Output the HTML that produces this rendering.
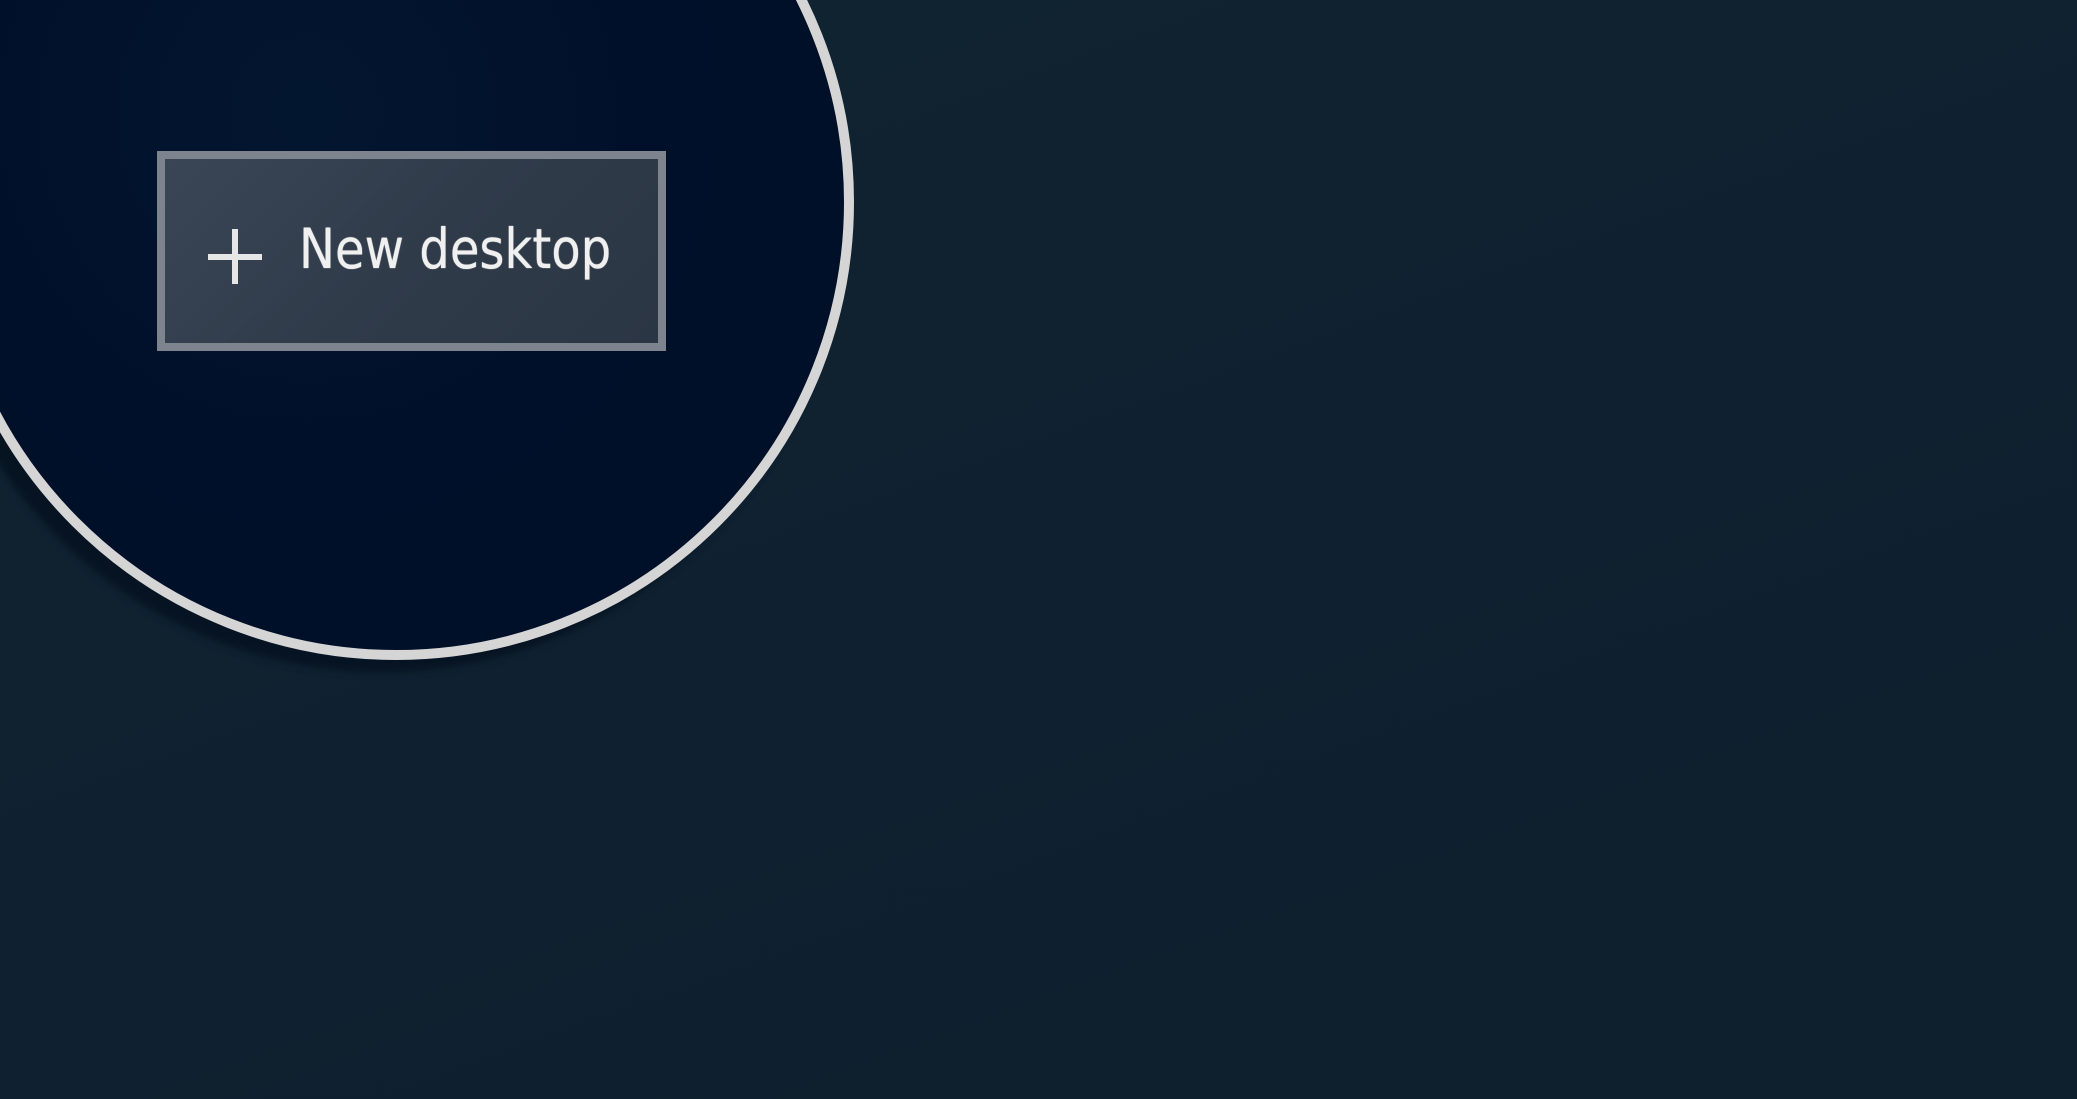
<!DOCTYPE html>
<html><head><meta charset="utf-8"><style>
html,body{margin:0;padding:0;width:2077px;height:1099px;overflow:hidden;background:#10212f;}
body{background:linear-gradient(160deg,#112431 0%,#0f2130 50%,#0e1f2d 100%);position:relative;}
.shadow{position:absolute;left:-70px;top:-250px;width:916px;height:916px;border-radius:50%;background:rgba(0,10,25,0.6);transform:translate(-6px,6px);filter:blur(4px);}
.circle{position:absolute;left:-62px;top:-256px;width:896px;height:896px;border-radius:50%;border:10px solid #d5d5d5;background:radial-gradient(circle at 40% 40%,#031630 0%,#01102a 45%,#000f26 100%);}
.btn{position:absolute;left:157px;top:151px;width:493px;height:184px;border:8px solid #7d848d;background:linear-gradient(135deg,#3a4656 0%,#303b4a 50%,#2b3644 100%);}
.plus{position:absolute;left:43px;top:70px;width:54px;height:55px;}
.plus:before{content:"";position:absolute;left:24px;top:0;width:6px;height:55px;background:#e6e6e6;}
.plus:after{content:"";position:absolute;left:0;top:25px;width:54px;height:6px;background:#e6e6e6;}
.txt{position:absolute;left:134px;top:63px;font-family:"DejaVu Sans","Liberation Sans",sans-serif;font-size:55px;color:#f0f0f0;line-height:1;white-space:nowrap;transform:scaleX(0.875);transform-origin:left top;text-shadow:0 0 1px #fff;}
</style></head><body>
<div class="shadow"></div>
<div class="circle"></div>
<div class="btn"><div class="plus"></div><div class="txt">New desktop</div></div>
</body></html>
